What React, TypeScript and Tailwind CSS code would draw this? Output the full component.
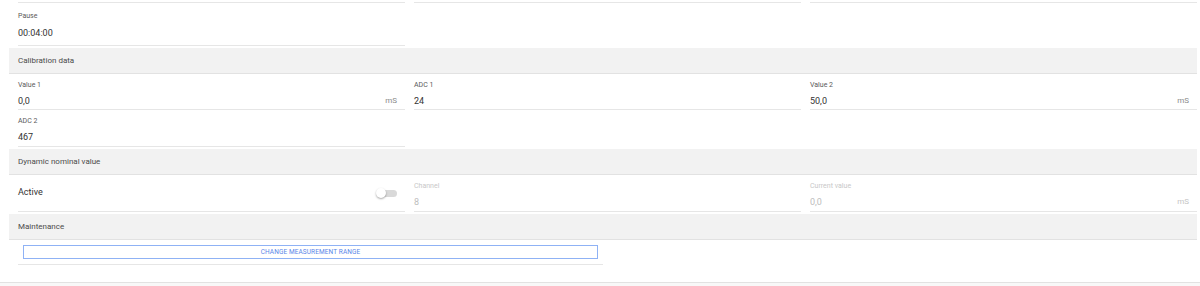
import React from "react";

const Header = ({ title }: { title: string }) => (
  <div className="h-[26px] bg-[#f2f2f2] border-b border-[#e2e2e2] flex items-center pl-[9px] text-[8px] text-[#4a4a4a]">
    {title}
  </div>
);

type FieldProps = {
  label: string;
  value: string;
  unit?: string;
  disabled?: boolean;
  pb?: "3" | "4";
};

const Field = ({ label, value, unit, disabled, pb = "4" }: FieldProps) => (
  <div className="pl-[9px]">
    <div
      className={
        "border-b border-[#e6e6e6] pt-[7px] " + (pb === "3" ? "pb-[2px]" : "pb-[3px]")
      }
    >
      <div className={"h-[9px] leading-[9px] text-[7px] " + (disabled ? "text-[#c8c8c8]" : "text-[#5a5a5a]")}>
        {label}
      </div>
      <div className="mt-[5px] h-[12px] flex items-center justify-between pr-[8px]">
        <span className={"text-[9px] leading-[12px] " + (disabled ? "text-[#bdbdbd]" : "text-[#333]")}>
          {value}
        </span>
        {unit && (
          <span className={"text-[8px] leading-[12px] " + (disabled ? "text-[#c4c4c4]" : "text-[#8a8a8a]")}>
            {unit}
          </span>
        )}
      </div>
    </div>
  </div>
);

export default function App() {
  return (
    <div
      className="w-[1200px] h-[286px] bg-white overflow-hidden flex flex-col"
      style={{ fontFamily: "Roboto, 'Liberation Sans', sans-serif" }}
    >
      <div className="pl-[9px] pr-[3px] flex flex-col">
        {/* remnant of the row above */}
        <div className="grid grid-cols-3">
          <div className="pl-[9px]"><div className="h-[3px] border-b border-[#e6e6e6]" /></div>
          <div className="pl-[9px]"><div className="h-[3px] border-b border-[#e6e6e6]" /></div>
          <div className="pl-[9px]"><div className="h-[3px] border-b border-[#e6e6e6]" /></div>
        </div>

        {/* Pause */}
        <div className="grid grid-cols-3 pb-[2px]">
          <div className="pl-[9px]">
            <div className="border-b border-[#e6e6e6] pt-[9px] pb-[6px]">
              <div className="h-[9px] leading-[9px] text-[7px] text-[#5a5a5a]">Pause</div>
              <div className="mt-[6px] h-[12px] text-[9px] leading-[12px] text-[#333]">00:04:00</div>
            </div>
          </div>
        </div>

        <Header title="Calibration data" />
        <div className="grid grid-cols-3">
          <Field label="Value 1" value="0,0" unit="mS" pb="3" />
          <Field label="ADC 1" value="24" pb="3" />
          <Field label="Value 2" value="50,0" unit="mS" pb="3" />
        </div>
        <div className="grid grid-cols-3 pb-[2px]">
          <Field label="ADC 2" value="467" />
        </div>

        <Header title="Dynamic nominal value" />
        <div className="grid grid-cols-3 pb-[2px]">
          <div className="pl-[9px]">
            <div className="h-[37px] border-b border-[#e6e6e6] flex items-center justify-between pr-[8px]">
              <span className="text-[9px] text-[#333]">Active</span>
              <div className="relative w-[21px] h-[10px] flex items-center">
                <div className="absolute left-[3px] right-0 h-[7px] rounded-full bg-[#d9d9d9]" />
                <div className="absolute left-0 w-[10px] h-[10px] rounded-full bg-white shadow-[0_1px_2px_rgba(0,0,0,0.35)]" />
              </div>
            </div>
          </div>
          <Field label="Channel" value="8" disabled />
          <Field label="Current value" value="0,0" unit="mS" disabled />
        </div>

        <Header title="Maintenance" />
        <div className="grid grid-cols-2">
          <div className="pl-[9px]">
            <div className="border-b border-[#e6e6e6] pt-[5px] pb-[5px] px-[5px]">
              <button className="block w-full h-[14px] border border-[#8fb2f5] bg-white text-[#5a86e8] text-[6.5px] leading-[12px] tracking-[0.1px] uppercase">
                Change measurement range
              </button>
            </div>
          </div>
        </div>
      </div>
      <div className="mt-[17px] flex-1 border-t border-[#e2e2e2] bg-[#f8f8f8]" />
    </div>
  );
}
